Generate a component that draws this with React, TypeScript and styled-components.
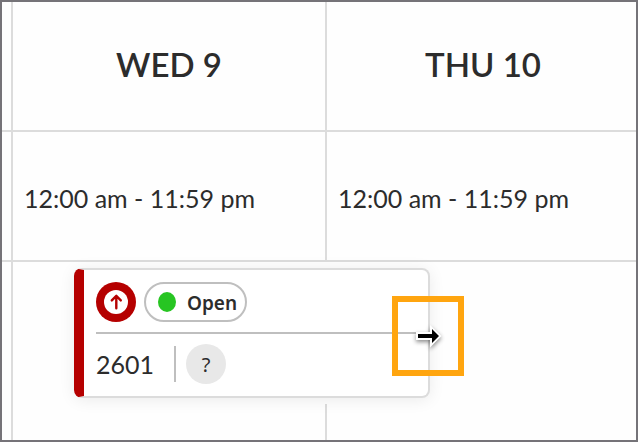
import React from "react";
import styled, { createGlobalStyle } from "styled-components";

const GlobalStyle = createGlobalStyle`
  *, *::before, *::after { box-sizing: border-box; }
  body {
    margin: 0;
    background: #fff;
    color: #2c2c2c;
    font-family: Lato, "Open Sans", sans-serif;
  }
`;

const line = "#dcdcdc";

const Frame = styled.main`
  display: flex;
  min-height: 100vh;
  border: 2px solid #757378;
  background: #fefefe;
  overflow: hidden;
`;

const Calendar = styled.table`
  flex: none;
  width: calc(100% + 3px);
  table-layout: fixed;
  border-collapse: separate;
  border-spacing: 0;
`;

const GutterColumn = styled.col`
  width: 9px;
`;

const Gutter = styled.td<{ $ruled?: boolean }>`
  padding: 0;
  border-bottom: ${(p) => (p.$ruled ? `2px solid ${line}` : "none")};
`;

const DayHeader = styled.th`
  height: 130px;
  padding: 0 0 4px;
  border-left: 2px solid ${line};
  border-bottom: 2px solid ${line};
  font-size: 33px;
  font-weight: 600;
  line-height: 40px;
  text-align: center;
`;

const HoursCell = styled.td`
  height: 130px;
  padding: 4px 0 0 11px;
  border-left: 2px solid ${line};
  border-bottom: 2px solid ${line};
  font-size: 25px;
  line-height: 32px;
  white-space: nowrap;
`;

const EventCell = styled.td`
  height: 142px;
  padding: 6px 0 0 61px;
  border-left: 2px solid ${line};
  vertical-align: top;
`;

const EmptyCell = styled.td`
  height: 36px;
  padding: 0;
  border-left: 2px solid ${line};
`;

const EventCard = styled.article`
  position: relative;
  display: flex;
  flex-direction: column;
  gap: 10px;
  width: 63%;
  padding: 12px 10px 12px 12px;
  border: 2px solid ${line};
  border-left: 10px solid #b50000;
  border-radius: 8px;
  background: #fff;
  box-shadow: 0 2px 16px rgba(0, 0, 0, 0.08);
`;

const CardRow = styled.div`
  display: flex;
  align-items: center;
  height: 40px;
`;

const Rule = styled.hr`
  width: 100%;
  height: 2px;
  margin: 0;
  border: 0;
  background: #bfbfbf;
`;

const PriorityIcon = styled.svg`
  flex: none;
  width: 40px;
  height: 40px;
`;

const StatusPill = styled.span`
  display: flex;
  align-items: center;
  gap: 11px;
  height: 40px;
  margin-left: 8px;
  padding: 0 8px 0 12px;
  border: 2px solid #bfbfbf;
  border-radius: 20px;
  font-family: "Noto Sans", "Open Sans", sans-serif;
  font-size: 19px;
  font-weight: 600;
  line-height: 24px;
`;

const StatusLabel = styled.span`
  padding-top: 2px;
`;

const StatusDot = styled.span`
  width: 18px;
  height: 20px;
  border-radius: 50%;
  background: #27c522;
`;

const Identifier = styled.span`
  padding-right: 20px;
  font-size: 25px;
  line-height: 32px;
`;

const Separator = styled.span`
  width: 2px;
  height: 36px;
  margin-right: 10px;
  background: #bfbfbf;
`;

const Assignee = styled.button`
  width: 40px;
  height: 40px;
  padding: 2px 0 0;
  border: 0;
  border-radius: 50%;
  background: #e8e8e8;
  color: #2c2c2c;
  font-family: "Noto Sans", "Open Sans", sans-serif;
  font-size: 20px;
  line-height: 38px;
`;

const ResizeHighlight = styled.div`
  position: absolute;
  top: 26px;
  right: -36px;
  width: 72px;
  height: 80px;
  padding: 20px 0 0 15px;
  border: 6px solid #ffa50f;
`;

const ResizeCursor = styled.svg`
  display: block;
  width: 32px;
  height: 34px;
  filter: drop-shadow(0 2px 2px rgba(0, 0, 0, 0.45));
`;

const days = [
  { label: "WED 9", hours: "12:00 am - 11:59 pm" },
  { label: "THU 10", hours: "12:00 am - 11:59 pm" },
];

function WorkOrder() {
  return (
    <EventCard>
      <CardRow>
        <PriorityIcon viewBox="0 0 40 40" role="img" aria-label="High priority">
          <circle cx="20" cy="20" r="20" fill="#b50000" />
          <circle cx="20" cy="20" r="12" fill="#fff" />
          <path
            d="M20.3 26.2V14.2M15.8 18.4L20.3 13.8L24.8 18.4"
            fill="none"
            stroke="#b50000"
            strokeWidth="2.4"
            strokeLinecap="round"
            strokeLinejoin="round"
          />
        </PriorityIcon>
        <StatusPill>
          <StatusDot />
          <StatusLabel>Open</StatusLabel>
        </StatusPill>
      </CardRow>
      <Rule />
      <CardRow>
        <Identifier>2601</Identifier>
        <Separator />
        <Assignee type="button">?</Assignee>
      </CardRow>
      <ResizeHighlight>
        <ResizeCursor viewBox="0 0 32 34" aria-hidden="true">
          <path d="M3 10H17V3L28.5 14L17 25.5V18H3Z" fill="#fff" />
          <path d="M5 12H19V7L26 14L19 21V16H5Z" fill="#000" />
        </ResizeCursor>
      </ResizeHighlight>
    </EventCard>
  );
}

export default function App() {
  return (
    <>
      <GlobalStyle />
      <Frame>
        <Calendar>
          <colgroup>
            <GutterColumn />
            <col />
            <col />
          </colgroup>
          <thead>
            <tr>
              <Gutter $ruled />
              {days.map((day) => (
                <DayHeader key={day.label} scope="col">
                  {day.label}
                </DayHeader>
              ))}
            </tr>
          </thead>
          <tbody>
            <tr>
              <Gutter $ruled />
              {days.map((day) => (
                <HoursCell key={day.label}>{day.hours}</HoursCell>
              ))}
            </tr>
            <tr>
              <Gutter />
              <EventCell colSpan={2}>
                <WorkOrder />
              </EventCell>
            </tr>
            <tr>
              <Gutter />
              {days.map((day) => (
                <EmptyCell key={day.label} />
              ))}
            </tr>
          </tbody>
        </Calendar>
      </Frame>
    </>
  );
}
